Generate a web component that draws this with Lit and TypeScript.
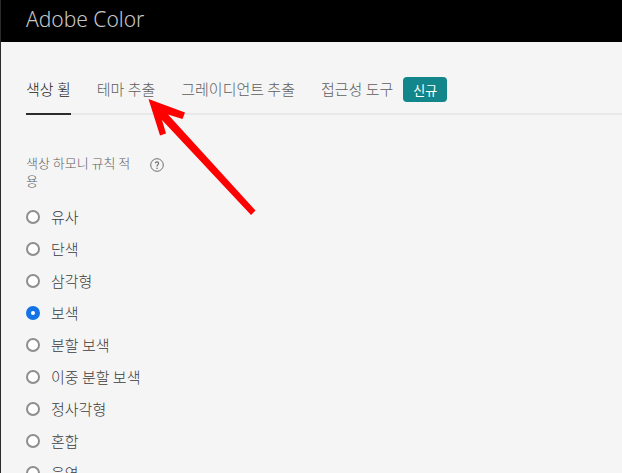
import { LitElement, html, css } from "lit";
import { customElement, state } from "lit/decorators.js";

const TABS = ["색상 휠", "테마 추출", "그레이디언트 추출", "접근성 도구"];
const RULES = ["유사", "단색", "삼각형", "보색", "분할 보색", "이중 분할 보색", "정사각형", "혼합", "음영"];

@customElement("app-root")
export class AppRoot extends LitElement {
  @state() private rule = "보색";

  static styles = css`
    :host {
      display: block;
      position: relative;
      box-sizing: border-box;
      height: 100vh;
      overflow: hidden;
      border-left: 1px solid #2c2c2c;
      background: #f5f5f5;
      color: #3c3c3c;
      font-family: "Noto Sans CJK KR", sans-serif;
      font-size: 15px;
      font-weight: 300;
    }
    .bar {
      display: flex;
      align-items: center;
      height: 42px;
      padding: 0 25px 4px;
      box-sizing: border-box;
      background: #000;
    }
    .brand {
      margin: 0;
      color: #c8c8c8;
      font: 300 21px/28px "Noto Sans", "Open Sans", sans-serif;
    }
    .tabs {
      display: flex;
      gap: 26px;
      margin: 30px 0 0 25px;
      border-bottom: 2px solid #e8e8e8;
    }
    .tab {
      display: flex;
      align-items: center;
      gap: 10px;
      box-sizing: border-box;
      height: 43px;
      margin-bottom: -2px;
      padding-bottom: 7px;
      border-bottom: 2px solid transparent;
      color: #5e5e5e;
      line-height: 24px;
      text-decoration: none;
      white-space: nowrap;
    }
    .tab.current {
      color: #1c1c1c;
      border-color: #2c2c2c;
    }
    .badge {
      padding: 0 10px;
      border-radius: 4px;
      background: #12868a;
      color: #fff;
      font-size: 13px;
      font-weight: 400;
      line-height: 25px;
    }
    .rules {
      padding: 39px 25px 0;
    }
    .heading {
      display: flex;
      align-items: flex-start;
      gap: 15px;
      margin-bottom: 11px;
    }
    .title {
      width: 109px;
      color: #5e5e5e;
      font-size: 13px;
      line-height: 18px;
      word-break: break-all;
    }
    .help {
      display: flex;
      margin-top: 4px;
      padding: 0;
      border: 0;
      background: none;
    }
    .rule {
      display: flex;
      align-items: center;
      gap: 11px;
      width: max-content;
      height: 32px;
    }
    .name {
      padding-bottom: 2px;
    }
    .radio {
      appearance: none;
      box-sizing: border-box;
      width: 14px;
      height: 14px;
      margin: 0;
      border: 2px solid #8e8e8e;
      border-radius: 50%;
      background: #fff;
    }
    .radio:checked {
      border: 5px solid #1473e6;
    }
    .arrow {
      position: absolute;
      left: 147px;
      top: 98px;
      pointer-events: none;
    }
  `;

  render() {
    return html`
      <header class="bar"><h1 class="brand">Adobe Color</h1></header>
      <nav class="tabs">
        ${TABS.map(
          (name, i) => html`<a class="tab ${i === 0 ? "current" : ""}" href="#"
            ><span>${name}</span>${i === 3 ? html`<span class="badge">신규</span>` : ""}</a
          >`
        )}
      </nav>
      <div class="rules" role="radiogroup" aria-labelledby="rules-title">
        <div class="heading">
          <span class="title" id="rules-title">색상 하모니 규칙 적용</span>
          <button class="help" aria-label="도움말">
            <svg width="14" height="14" viewBox="0 0 14 14" fill="none" stroke="#6e6e6e">
              <circle cx="7" cy="7" r="6.3" />
              <path d="M5.400 5.300C5.400 3.500 8.600 3.500 8.600 5.300C8.600 6.600 7 6.700 7 8.400" stroke-width="1.2" />
              <circle cx="7" cy="10.200" r=".8" fill="#6e6e6e" stroke="none" />
            </svg>
          </button>
        </div>
        ${RULES.map(
          (name) => html`<label class="rule"
            ><input
              class="radio"
              type="radio"
              name="rule"
              .checked=${this.rule === name}
              @change=${() => (this.rule = name)}
            /><span class="name">${name}</span></label
          >`
        )}
      </div>
      <svg class="arrow" width="110" height="120" viewBox="0 0 110 120" aria-hidden="true">
        <path
          fill="#f00"
          d="M.5 1L37 14.500L34.500 21L20 16.500L107.500 112.500L103 117L14 22L18 35.500L12 37.500Z"
        />
      </svg>
    `;
  }
}
